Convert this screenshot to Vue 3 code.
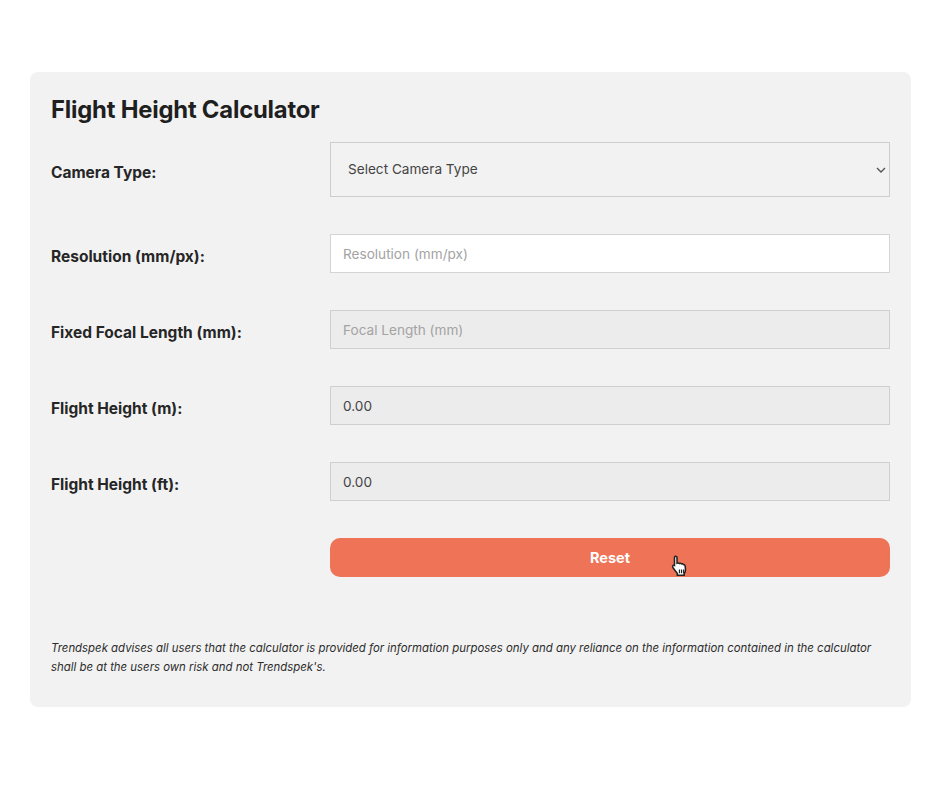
<template>
  <div class="page">
    <div class="card">
      <h2 class="title">Flight Height Calculator</h2>

      <div class="form">
        <label class="label">Camera Type:</label>
        <div class="select-wrap">
          <select v-model="camera" class="select">
            <option value="">Select Camera Type</option>
          </select>
          <svg class="chevron" width="10" height="6" viewBox="0 0 10 6">
            <path d="M1 1l4 4 4-4" fill="none" stroke="#555" stroke-width="1.4" />
          </svg>
        </div>

        <label class="label">Resolution (mm/px):</label>
        <input class="field" type="text" placeholder="Resolution (mm/px)" />

        <label class="label">Fixed Focal Length (mm):</label>
        <input class="field readonly" type="text" placeholder="Focal Length (mm)" readonly />

        <label class="label">Flight Height (m):</label>
        <input class="field readonly" type="text" :value="heightM" readonly />

        <label class="label">Flight Height (ft):</label>
        <input class="field readonly" type="text" :value="heightFt" readonly />

        <div></div>
        <div class="button-wrap">
          <button class="reset" type="button">Reset</button>
          <svg class="cursor" width="18" height="22" viewBox="0 0 16 20">
            <path
              d="M4 1.2c.8 0 1.3.5 1.3 1.3v5l.6-.2c.7-.2 1.2 0 1.5.4.7-.3 1.4-.2 1.8.4.7-.3 1.5-.1 1.8.6.8-.2 1.6.3 1.7 1.2l.3 3.4c.1 1.4-.4 2.5-1.2 3.4V18.500H5.600v-1.700C4.500 15.500 3.200 13.600 1.800 11.800 1 10.800 1.200 9.700 2 9.300c.3-.2.700-.1 1 .1V2.500C2.900 1.700 3.300 1.200 4 1.200z"
              fill="#fff"
              stroke="#222"
              stroke-width="1.400"
            />
            <path d="M7.500 13.200v3.300M9.400 13.200v3.300M11.300 13.200v3.300" stroke="#222" stroke-width="1.100" />
          </svg>
        </div>
      </div>

      <p class="note">
        Trendspek advises all users that the calculator is provided for information purposes only and any reliance on the information contained in the calculator shall be at the users own risk and not Trendspek's.
      </p>
    </div>
  </div>
</template>

<script setup>
import { ref } from 'vue';

const camera = ref('');
const heightM = ref('0.00');
const heightFt = ref('0.00');
</script>

<style>
html, body {
  background: #fff;
}
</style>

<style scoped>
.page {
  width: 940px;
  height: 788px;
  box-sizing: border-box;
  padding: 72px 29px 0 30px;
  font-family: Inter, "Liberation Sans", sans-serif;
  overflow: hidden;
}

.card {
  box-sizing: border-box;
  height: 635px;
  padding: 24px 21px 0 20px;
  background: #f2f2f2;
  border-radius: 8px;
}

.title {
  margin: 0 0 18px;
  padding-left: 1px;
  font-size: 23.8px;
  line-height: 28px;
  font-weight: 700;
  letter-spacing: -0.2px;
  color: #1f1f1f;
}

.form {
  display: grid;
  grid-template-columns: 280px 560px;
  row-gap: 37px;
  align-items: center;
}

.label {
  font-size: 15.5px;
  font-weight: 700;
  color: #262626;
  padding: 5px 0 0 1px;
}

.select-wrap {
  position: relative;
  height: 55px;
}

.select {
  appearance: none;
  box-sizing: border-box;
  width: 100%;
  height: 100%;
  padding: 0 16px 1px 17px;
  border: 1px solid #cdcdcd;
  border-radius: 0;
  background: #f2f2f2;
  font: 13.6px Inter, "Liberation Sans", sans-serif;
  color: #444;
}

.chevron {
  position: absolute;
  right: 4px;
  top: 25px;
}

.field {
  box-sizing: border-box;
  width: 100%;
  height: 39px;
  padding: 0 12px;
  border: 1px solid #d4d4d4;
  background: #fff;
  font: 13.6px Inter, "Liberation Sans", sans-serif;
  color: #444;
  outline: none;
}

.field::placeholder {
  color: #a3a3a3;
  opacity: 1;
}

.readonly {
  background: #ececec;
  border-color: #cfcfcf;
}

.button-wrap {
  position: relative;
}

.reset {
  display: block;
  width: 100%;
  height: 39px;
  border: none;
  border-radius: 10px;
  background: #ef7357;
  color: #fff;
  font: 700 14.5px Inter, "Liberation Sans", sans-serif;
}

.cursor {
  position: absolute;
  left: 341px;
  top: 17px;
}

.note {
  margin: 62px 0 0;
  padding-left: 1px;
  font-size: 11.4px;
  line-height: 19px;
  font-style: italic;
  color: #2c2c2c;
}
</style>
